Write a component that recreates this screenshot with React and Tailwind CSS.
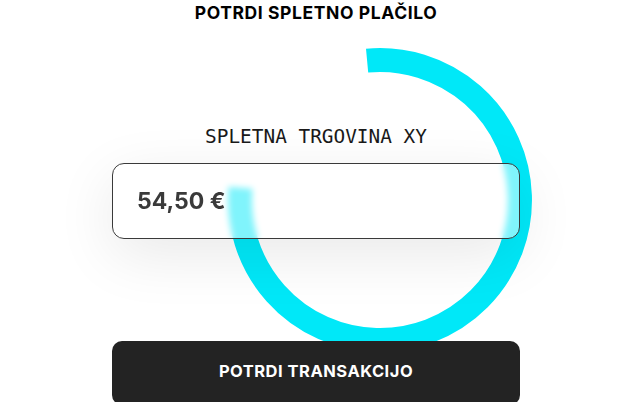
import React from 'react'

// Payment confirmation screen with a decorative progress ring behind the card
function Ring() {
  return (
    <svg
      className="absolute left-0 top-0 pointer-events-none"
      width="632"
      height="402"
      viewBox="0 0 632 402"
    >
      <path
        d="M367.1 60.6 A140 140 0 1 1 240.5 187.8"
        fill="none"
        stroke="#00e8f8"
        strokeWidth="24"
        strokeLinecap="butt"
      />
    </svg>
  )
}

export default function App() {
  return (
    <div className="relative w-[632px] h-[402px] overflow-hidden bg-white font-['Inter',sans-serif]">
      <Ring />
      <div className="relative flex flex-col items-center">
        <h1 className="h-[26px] leading-[25px] text-[17.5px] font-bold text-black tracking-[0.6px]">
          POTRDI SPLETNO PLAČILO
        </h1>
        <p className="mt-[99px] h-[24px] leading-[24px] text-[19.4px] text-[#1a1a1a] font-['DejaVu_Sans_Mono','Liberation_Mono',monospace]">
          SPLETNA TRGOVINA XY
        </p>
        <div className="mt-[14px] w-[408px] h-[76px] flex items-center pl-6 rounded-[12px] border border-[#3a3a3a] bg-white/50 backdrop-blur-[3px] shadow-[0_16px_60px_rgba(0,0,0,0.09)]">
          <span className="text-[23px] font-bold text-[#3a3a3a]">54,50 €</span>
        </div>
        <button className="mt-[102px] w-[408px] h-[64px] rounded-[10px] bg-[#232323] text-white text-[16.5px] font-bold tracking-[0.5px] leading-none pb-[3px]">
          POTRDI TRANSAKCIJO
        </button>
      </div>
    </div>
  )
}
